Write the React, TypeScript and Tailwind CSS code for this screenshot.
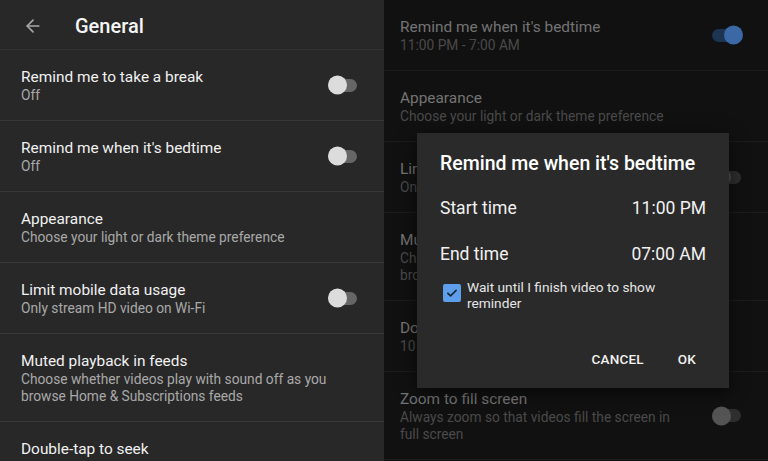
import { ArrowLeft } from 'lucide-react'

type Item = {
  title: string
  subtitle?: string
  toggle?: 'on' | 'off'
  tall?: boolean
}

const leftItems: Item[] = [
  { title: 'Remind me to take a break', subtitle: 'Off', toggle: 'off' },
  { title: "Remind me when it's bedtime", subtitle: 'Off', toggle: 'off' },
  { title: 'Appearance', subtitle: 'Choose your light or dark theme preference' },
  { title: 'Limit mobile data usage', subtitle: 'Only stream HD video on Wi-Fi', toggle: 'off' },
  { title: 'Muted playback in feeds', subtitle: 'Choose whether videos play with sound off as you browse Home & Subscriptions feeds', tall: true },
  { title: 'Double-tap to seek', subtitle: '10 seconds' },
]

const rightItems: Item[] = [
  { title: "Remind me when it's bedtime", subtitle: '11:00 PM - 7:00 AM', toggle: 'on' },
  { title: 'Appearance', subtitle: 'Choose your light or dark theme preference' },
  { title: 'Limit mobile data usage', subtitle: 'Only stream HD video on Wi-Fi', toggle: 'off' },
  { title: 'Muted playback in feeds', subtitle: 'Choose whether videos play with sound off as you browse Home & Subscriptions feeds', tall: true },
  { title: 'Double-tap to seek', subtitle: '10 seconds' },
  { title: 'Zoom to fill screen', subtitle: 'Always zoom so that videos fill the screen in full screen', toggle: 'off', tall: true },
]

function Toggle({ on, dim }: { on: boolean; dim: boolean }) {
  const track = on ? 'bg-[#1e3453]' : dim ? 'bg-[#2e2e2e]' : 'bg-[#666666]'
  const thumb = on ? 'bg-[#3a69a6]' : dim ? 'bg-[#545454]' : 'bg-[#dcdcdc]'
  return (
    <div className={`relative w-[29px] h-[13px] rounded-full ${track}`}>
      <div
        className={`absolute top-1/2 -translate-y-1/2 w-[19px] h-[19px] rounded-full ${thumb} ${on ? 'right-[-2px]' : 'left-0'}`}
      />
    </div>
  )
}

function Row({ item, dim }: { item: Item; dim: boolean }) {
  return (
    <div
      className={`flex items-center border-b ${item.tall ? 'h-[88px]' : 'h-[71px]'} ${
        dim ? 'border-[#1c1c1c] pl-[16px]' : 'border-[#393939] pl-[21px]'
      } pr-[27px]`}
    >
      <div className={`flex-1 min-w-0 self-start pt-[17px] ${item.toggle ? 'pr-[40px]' : ''}`}>
        <div className={`text-[15.4px] leading-[20px] ${dim ? 'text-[#747474]' : 'text-[#f1f1f1]'}`}>{item.title}</div>
        {item.subtitle && (
          <div
            className={`text-[13.75px] leading-[17px] ${item.toggle ? '' : 'max-w-[312px]'} ${
              dim ? 'text-[#4a4a4a]' : 'text-[#a9a9a9]'
            }`}
          >
            {item.subtitle}
          </div>
        )}
      </div>
      {item.toggle && <Toggle on={item.toggle === 'on'} dim={dim} />}
    </div>
  )
}

function Dialog() {
  return (
    <div className="absolute left-[33px] top-[133px] w-[312px] h-[255px] bg-[#2a2a2a] shadow-[0_4px_16px_rgba(0,0,0,0.6)] pt-[19px]">
      <div className="px-[23px] text-[19.5px] leading-[24px] font-medium text-white">Remind me when it's bedtime</div>
      <div className="mt-[9px] px-[23px]">
        <div className="h-[46px] flex items-center justify-between text-[17.5px] text-[#f1f1f1]">
          <span>Start time</span>
          <span>11:00 PM</span>
        </div>
        <div className="h-[46px] flex items-center justify-between text-[17.5px] text-[#f1f1f1]">
          <span>End time</span>
          <span>07:00 AM</span>
        </div>
      </div>
      <div className="mt-[2px] flex items-start pl-[26px] pr-[23px]">
        <div className="mt-[5px] w-[18px] h-[18px] rounded-[2px] bg-[#5d9fea] flex items-center justify-center shrink-0">
          <svg width="14" height="14" viewBox="0 0 24 24" fill="none" stroke="#1b2a3b" strokeWidth="3" strokeLinecap="round" strokeLinejoin="round">
            <path d="M5 12.5l4.5 4.5L19 7.5" />
          </svg>
        </div>
        <div className="ml-[6px] text-[13.7px] leading-[16px] text-[#e6e6e6] w-[200px]">
          Wait until I finish video to show reminder
        </div>
      </div>
      <div className="mt-[30px] flex justify-end gap-[18px] pr-[25px]">
        <button className="h-[36px] px-2 text-[13.5px] font-medium text-[#f1f1f1] tracking-[0.2px]">CANCEL</button>
        <button className="h-[36px] px-2 text-[13.5px] font-medium text-[#f1f1f1] tracking-[0.2px]">OK</button>
      </div>
    </div>
  )
}

export default function App() {
  return (
    <div className="flex w-[768px] h-[461px] overflow-hidden font-['Roboto',sans-serif]">
      <div className="w-[384px] h-full bg-[#282828] shrink-0">
        <div className="h-[50px] flex items-center pt-[3px] border-b border-[#333333]">
          <div className="w-[75px] pl-[23px]">
            <ArrowLeft size={20} color="#a8a8a8" strokeWidth={2} />
          </div>
          <div className="text-[20px] font-medium text-[#f5f5f5]">General</div>
        </div>
        {leftItems.map((it) => (
          <Row key={it.title} item={it} dim={false} />
        ))}
      </div>
      <div className="relative w-[384px] h-full bg-[#111111] shrink-0">
        {rightItems.map((it) => (
          <Row key={it.title} item={it} dim={true} />
        ))}
        <Dialog />
      </div>
    </div>
  )
}
